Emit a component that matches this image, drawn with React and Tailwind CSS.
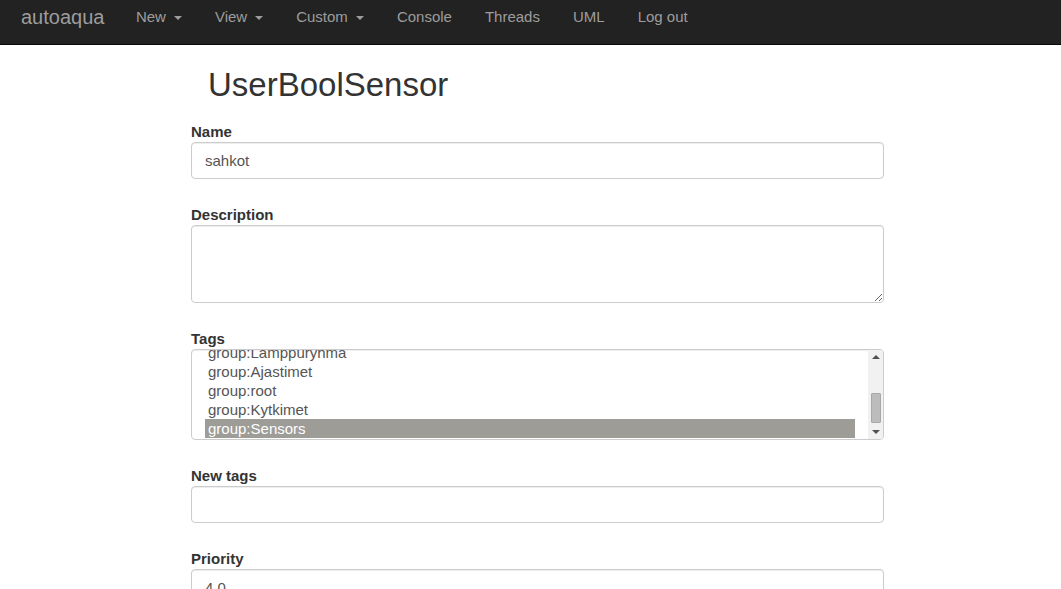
import React from 'react';

const font = { fontFamily: '"Liberation Sans", Arial, sans-serif' };

function Caret() {
    return (
        <span className="ml-[8px] inline-block h-0 w-0 border-x-[4px] border-t-[4px] border-x-transparent border-t-[#9d9d9d] align-middle" />
    );
}

function NavLink({ children, dropdown }) {
    return (
        <a className="block px-[16.5px] pt-[7px] text-[15px] leading-[20px] text-[#9d9d9d]">
            {children}
            {dropdown && <Caret />}
        </a>
    );
}

function Label({ children }) {
    return <label className="block h-[20px] text-[15px] font-bold leading-[20px] text-[#333]">{children}</label>;
}

const tags = ['group:Lamppuryhma', 'group:Ajastimet', 'group:root', 'group:Kytkimet', 'group:Sensors'];

function TagSelect() {
    return (
        <div className="flex h-[91px] overflow-hidden rounded-[4px] border border-[#ccc] bg-white shadow-[inset_0_1px_1px_rgba(0,0,0,0.075)]">
            <div className="flex-1 overflow-hidden pl-[13px] pr-[13px]">
                <div className="-mt-[7px]">
                    {tags.map((t) => (
                        <div
                            key={t}
                            className={
                                'h-[19px] px-[3px] text-[15px] leading-[19px] ' +
                                (t === 'group:Sensors' ? 'bg-[#9d9c97] text-white' : 'text-[#555]')
                            }
                        >
                            {t}
                        </div>
                    ))}
                </div>
            </div>
            <div className="flex w-[15px] flex-col items-center bg-[#f1f1f1]">
                <div className="mt-[5px] h-0 w-0 border-x-[4px] border-b-[4px] border-x-transparent border-b-[#505050]" />
                <div className="mt-[34px] h-[30px] w-[10px] rounded-[1px] border border-[#a8a8a8] bg-[#bcbcbc]" />
                <div className="mt-[7px] h-0 w-0 border-x-[4px] border-t-[4px] border-x-transparent border-t-[#505050]" />
            </div>
        </div>
    );
}

const inputCls =
    'block h-[37px] w-full rounded-[4px] border border-[#ccc] bg-white px-[13px] text-[15px] text-[#555] shadow-[inset_0_1px_1px_rgba(0,0,0,0.075)] outline-none';

export default function App() {
    return (
        <div className="min-h-screen bg-white" style={font}>
            <nav className="flex h-[45px] border-b border-[#080808] bg-[#222]">
                <a className="ml-[21px] block pr-[15px] pt-[7px] text-[20px] leading-[20px] text-[#9d9d9d]">autoaqua</a>
                <NavLink dropdown>New</NavLink>
                <NavLink dropdown>View</NavLink>
                <NavLink dropdown>Custom</NavLink>
                <NavLink>Console</NavLink>
                <NavLink>Threads</NavLink>
                <NavLink>UML</NavLink>
                <NavLink>Log out</NavLink>
            </nav>

            <div className="ml-[191px] w-[693px]">
                <h1 className="mt-[23px] pl-[17px] text-[33px] leading-[33px] text-[#333]">UserBoolSensor</h1>

                <div className="mt-[21px]">
                    <Label>Name</Label>
                    <input className={inputCls} defaultValue="sahkot" />
                </div>

                <div className="mt-[26px]">
                    <Label>Description</Label>
                    <textarea className="block h-[78px] w-full rounded-[4px] border border-[#ccc] bg-white px-[13px] text-[15px] text-[#555] shadow-[inset_0_1px_1px_rgba(0,0,0,0.075)] outline-none" />
                </div>

                <div className="mt-[26px]">
                    <Label>Tags</Label>
                    <TagSelect />
                </div>

                <div className="mt-[26px]">
                    <Label>New tags</Label>
                    <input className={inputCls} />
                </div>

                <div className="mt-[26px]">
                    <Label>Priority</Label>
                    <input className={inputCls} defaultValue="4.0" />
                </div>
            </div>
        </div>
    );
}
